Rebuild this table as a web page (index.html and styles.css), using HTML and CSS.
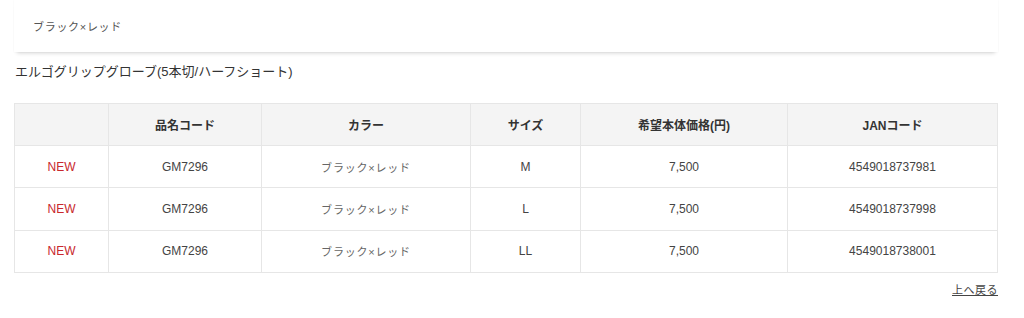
FILE: index.html
```html
<!DOCTYPE html>
<html lang="ja">
<head>
<meta charset="utf-8">
<link rel="stylesheet" href="styles.css">
</head>
<body>
<div class="page">
  <div class="color-card"><span class="color-name">ブラック×レッド</span></div>
  <h2 class="title">エルゴグリップグローブ(5本切/ハーフショート)</h2>
  <table class="spec">
    <thead>
      <tr><th class="c1"></th><th class="c2">品名コード</th><th class="c3">カラー</th><th class="c4">サイズ</th><th class="c5">希望本体価格(円)</th><th class="c6">JANコード</th></tr>
    </thead>
    <tbody>
      <tr><td class="new">NEW</td><td>GM7296</td><td class="col">ブラック×レッド</td><td>M</td><td>7,500</td><td>4549018737981</td></tr>
      <tr><td class="new">NEW</td><td>GM7296</td><td class="col">ブラック×レッド</td><td>L</td><td>7,500</td><td>4549018737998</td></tr>
      <tr><td class="new">NEW</td><td>GM7296</td><td class="col">ブラック×レッド</td><td>LL</td><td>7,500</td><td>4549018738001</td></tr>
    </tbody>
  </table>
  <div class="back"><a href="#" class="back-link">上へ戻る</a></div>
</div>
</body>
</html>
```
FILE: styles.css
```css
html, body { margin: 0; padding: 0; background: #fff; }
body { font-family: "Liberation Sans", "Noto Sans CJK JP", sans-serif; color: #333; }
.page { padding: 0 26px 0 14px; }
.color-card {
  height: 52px; box-sizing: border-box; display: flex; align-items: center;
  padding-left: 19px; background: #fff;
  box-shadow: 0 4px 4px -3px rgba(0,0,0,0.18), 0 0 2px rgba(0,0,0,0.04);
}
.color-name { font-size: 11px; color: #555; letter-spacing: 0.7px; }
.title { margin: 11px 0 0 1px; font-size: 13px; font-weight: normal; line-height: 18px; color: #333; }
.spec { margin-top: 22px; width: 984px; border-collapse: collapse; font-size: 12px; }
.spec th, .spec td { border: 1px solid #e6e6e6; text-align: center; height: 41px; padding: 0; }
.spec td { height: 41.4px; color: #444; }
.spec th { background: #f4f4f4; font-weight: bold; color: #333; }
.c1 { width: 93px; } .c2 { width: 152px; } .c3 { width: 208px; } .c4 { width: 109px; } .c5 { width: 206px; }
.spec td.new { color: #c8282d; }
.spec td.col { font-size: 11px; color: #666; letter-spacing: 0.8px; }
.back { width: 984px; text-align: right; margin-top: 7px; }
.back-link { font-size: 11px; color: #444; text-decoration: underline; letter-spacing: 0.5px; }
```
